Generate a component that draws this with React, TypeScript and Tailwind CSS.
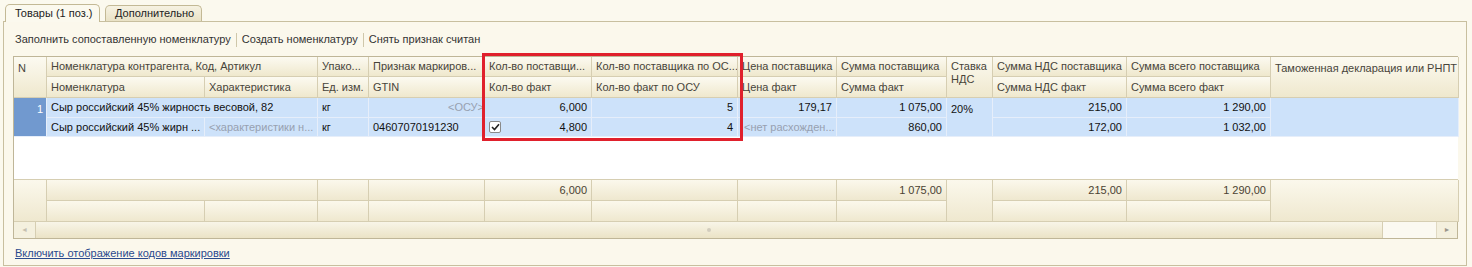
import React from 'react'

const cols = 'grid grid-cols-[33px_158px_113px_51px_116px_107px_146px_99px_110px_46px_134px_144px_188px]'

const hdr = 'bg-gradient-to-b from-[#fcfaf1] to-[#efe8cd] border-r border-b border-[#d6ceb2] px-[4px] flex items-center whitespace-nowrap overflow-hidden text-[#47443a]'
const cell = 'bg-[#cde2fa] border-r border-b border-[#e6eefa] px-[4px] flex items-center whitespace-nowrap overflow-hidden'
const row = cell + ' text-[#111]'
const grey = cell + ' text-[#97a0b0]'
const foot = 'bg-gradient-to-b from-[#fbf8ec] to-[#efe8cf] border-r border-b border-[#d6ceb2] px-[4px] flex items-center justify-end whitespace-nowrap text-[#4a4232]'

function Checkbox() {
  return (
    <span className="w-[12px] h-[12px] border border-[#8a8a8a] bg-white rounded-[2px] flex items-center justify-center shrink-0">
      <svg width="9" height="8" viewBox="0 0 9 8">
        <path d="M1 4 L3.5 6.5 L8 1.2" fill="none" stroke="#222" strokeWidth="1.6" />
      </svg>
    </span>
  )
}

export default function App() {
  return (
    <div className="w-[1472px] h-[267px] bg-[#fbf9ee] text-[11px] font-['Liberation_Sans',Arial,sans-serif] overflow-hidden">
      {/* Tabs */}
      <div className="flex items-end h-[21px] pl-[5px] pt-[3px] gap-[5px]">
        <div className="w-[95px] h-[18px] -mb-px pl-[9px] flex items-center border border-b-0 border-[#c3b995] rounded-t-[5px] bg-[#fbf9ee] text-[#222] z-10 relative">
          Товары (1 поз.)
        </div>
        <div className="w-[97px] h-[16px] pl-[9px] flex items-center border border-b-0 border-[#c3b995] rounded-t-[5px] bg-gradient-to-b from-[#f6f2e2] to-[#e9e2c6] text-[#222]">
          Дополнительно
        </div>
      </div>

      {/* Panel */}
      <div className="ml-[3px] w-[1464px] h-[245px] border border-[#c8bf9f] bg-[#fbf8ec] px-[9px] flex flex-col">
        <div className="flex items-center h-[33px] pt-[2px] text-[#333]">
          <span className="pl-[2px]">Заполнить сопоставленную номенклатуру</span>
          <span className="w-px h-[14px] bg-[#cfc7aa] mx-[5px]" />
          <span>Создать номенклатуру</span>
          <span className="w-px h-[14px] bg-[#cfc7aa] mx-[5px]" />
          <span>Снять признак считан</span>
        </div>

        {/* Table */}
        <div className="relative mt-[1px] w-[1445px] border-t border-l border-[#bfb698] border-b border-r-0">
          {/* header */}
          <div className={cols + ' grid-rows-[20px_21px]'}>
            <div className={hdr + ' row-span-2 items-start pt-[3px]'}>N</div>
            <div className={hdr + ' col-span-2'}>Номенклатура контрагента, Код, Артикул</div>
            <div className={hdr}>Упако...</div>
            <div className={hdr}>Признак маркиров...</div>
            <div className={hdr}>Кол-во поставщи...</div>
            <div className={hdr}>Кол-во поставщика по ОС...</div>
            <div className={hdr + ' px-[2px]'}>Цена поставщика</div>
            <div className={hdr}>Сумма поставщика</div>
            <div className={hdr + ' row-span-2 items-start pt-[3px] leading-[13px]'}>
              Ставка<br />НДС
            </div>
            <div className={hdr}>Сумма НДС поставщика</div>
            <div className={hdr}>Сумма всего поставщика</div>
            <div className={hdr + ' row-span-2 items-start pt-[3px]'}>Таможенная декларация или РНПТ</div>
            <div className={hdr}>Номенклатура</div>
            <div className={hdr}>Характеристика</div>
            <div className={hdr}>Ед. изм.</div>
            <div className={hdr}>GTIN</div>
            <div className={hdr}>Кол-во факт</div>
            <div className={hdr}>Кол-во факт по ОСУ</div>
            <div className={hdr + ' px-[2px]'}>Цена факт</div>
            <div className={hdr}>Сумма факт</div>
            <div className={hdr}>Сумма НДС факт</div>
            <div className={hdr}>Сумма всего факт</div>
          </div>

          {/* data */}
          <div className={cols + ' grid-rows-[20px_19px]'}>
            <div className="row-span-2 bg-[#7199cf] border-r border-b border-[#e6eefa] flex items-start justify-end pt-[3px] pr-[3px] text-white">1</div>
            <div className={row + ' col-span-2'}>Сыр российский 45% жирность весовой, 82</div>
            <div className={row}>кг</div>
            <div className={grey + ' justify-end pr-0'}>&lt;ОСУ&gt;</div>
            <div className={row + ' justify-end'}>6,000</div>
            <div className={row + ' justify-end'}>5</div>
            <div className={row + ' justify-end'}>179,17</div>
            <div className={row + ' justify-end'}>1 075,00</div>
            <div className={row + ' row-span-2 items-start pt-[3px]'}>20%</div>
            <div className={row + ' justify-end'}>215,00</div>
            <div className={row + ' justify-end'}>1 290,00</div>
            <div className={row + ' row-span-2'} />
            <div className={row}>Сыр российский 45% жирн ...</div>
            <div className={grey}>&lt;характеристики н...</div>
            <div className={row}>кг</div>
            <div className={row}>04607070191230</div>
            <div className={row + ' justify-between'}>
              <Checkbox />
              <span>4,800</span>
            </div>
            <div className={row + ' justify-end'}>4</div>
            <div className={grey + ' pl-[6px]'}>&lt;нет расхожден...</div>
            <div className={row + ' justify-end'}>860,00</div>
            <div className={row + ' justify-end'}>172,00</div>
            <div className={row + ' justify-end'}>1 032,00</div>
          </div>

          {/* empty area */}
          <div className="h-[43px] bg-white border-b border-[#d6ceb2]" />

          {/* footer */}
          <div className={cols + ' grid-rows-[21px_21px]'}>
            <div className={foot + ' row-span-2'} />
            <div className={foot + ' col-span-2'} />
            <div className={foot} />
            <div className={foot} />
            <div className={foot}>6,000</div>
            <div className={foot} />
            <div className={foot} />
            <div className={foot}>1 075,00</div>
            <div className={foot + ' row-span-2'} />
            <div className={foot}>215,00</div>
            <div className={foot}>1 290,00</div>
            <div className={foot + ' row-span-2'} />
            <div className={foot} />
            <div className={foot} />
            <div className={foot} />
            <div className={foot} />
            <div className={foot} />
            <div className={foot} />
            <div className={foot} />
            <div className={foot} />
            <div className={foot} />
            <div className={foot} />
          </div>

          {/* horizontal scrollbar */}
          <div className="flex h-[16px] bg-[#f4f0de]">
            <div className="w-[22px] border-r border-[#d6ceb2] flex items-center justify-center text-[#c5c0b0] text-[7px]">◄</div>
            <div className="flex-1 bg-gradient-to-b from-[#f8f5e8] to-[#ebe3c6] border-r border-[#d6ceb2] flex items-center justify-center">
              <span className="w-[4px] h-[4px] rounded-full bg-[#d2cdbd]" />
            </div>
            <div className="w-[54px] bg-[#fbf9f1] border-r border-[#e0d9c2]" />
            <div className="w-[21px] border-r border-[#bfb698] flex items-center justify-center text-[#9a958a] text-[7px]">►</div>
          </div>

          {/* highlight frame */}
          <div className="absolute left-[468px] top-[-4px] w-[261px] h-[88px] border-[3px] border-[#e0202c] pointer-events-none" />
        </div>

        <div className="mt-[6px] pl-[2px] text-[#2a4a8e] underline">
          Включить отображение кодов маркировки
        </div>
      </div>
    </div>
  )
}
